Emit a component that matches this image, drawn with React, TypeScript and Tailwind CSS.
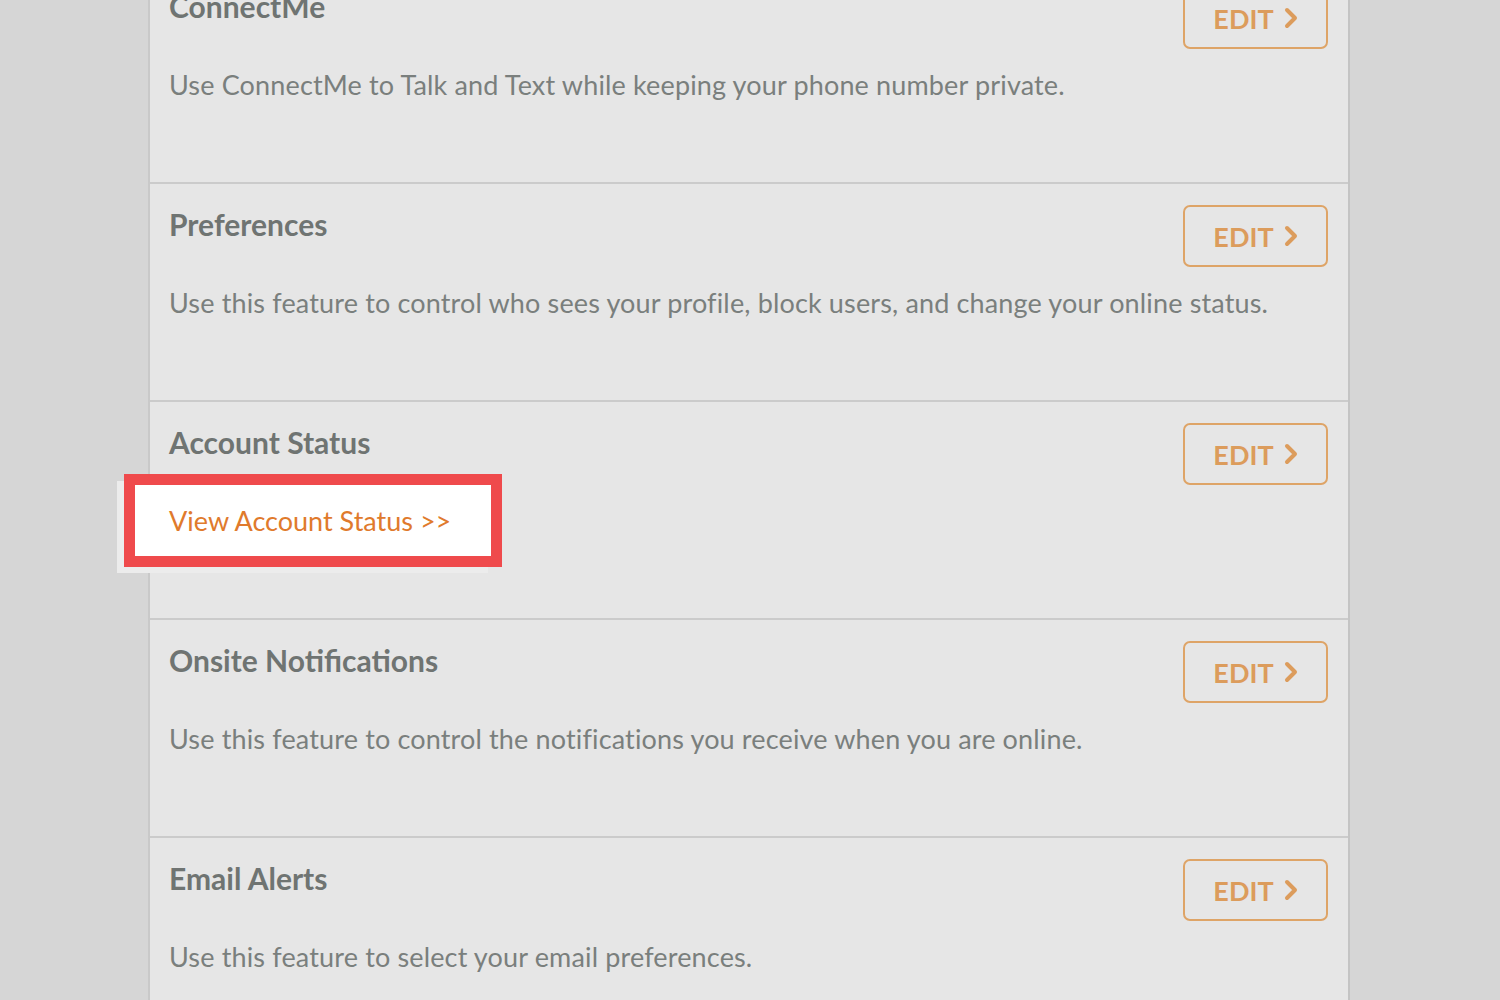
import React from "react";

const sections = [
  { title: "ConnectMe", desc: "Use ConnectMe to Talk and Text while keeping your phone number private." },
  { title: "Preferences", desc: "Use this feature to control who sees your profile, block users, and change your online status." },
  { title: "Account Status", link: "View Account Status >>" },
  { title: "Onsite Notifications", desc: "Use this feature to control the notifications you receive when you are online." },
  { title: "Email Alerts", desc: "Use this feature to select your email preferences." },
];

function EditButton() {
  return (
    <button className="flex h-[62px] w-[145px] items-center justify-center gap-[10px] rounded-[7px] border-2 border-[#dea467] text-[27px] font-bold text-[#dc9c5c]">
      <span className="leading-none">EDIT</span>
      <svg width="14" height="22" viewBox="0 0 14 22" fill="none">
        <path d="M3 3 L11 11 L3 19" stroke="#dc9c5c" strokeWidth="4" strokeLinecap="round" strokeLinejoin="round" />
      </svg>
    </button>
  );
}

export default function App() {
  return (
    <div className="h-[1000px] w-[1500px] overflow-hidden bg-[#d6d6d6]" style={{ fontFamily: "Lato, 'Open Sans', sans-serif" }}>
      <div className="ml-[148px] mt-[-34px] w-[1202px] border-l-2 border-r-2 border-l-[#c9c9c9] border-r-[#c4c4c4] bg-[#e6e6e6]">
        {sections.map((s) => (
          <div key={s.title} className="relative flex h-[218px] border-b-2 border-[#cbcbcb] pl-[19px] pr-[20px]">
            <div className="min-w-0 flex-1">
              <div className="mt-[22px] h-[36px] text-[30px] font-bold leading-[36px] text-[#6f7472]">{s.title}</div>
              {s.desc && (
                <div className="mt-[45px] whitespace-nowrap text-[27px] leading-[32px] tracking-[0.15px] text-[#7a7f7d]">{s.desc}</div>
              )}
              {s.link && (
                <div className="relative mt-[14px] ml-[-45px] w-[378px]">
                  <div className="absolute left-[-7px] top-[7px] h-[92px] w-[371px] bg-[#ececec]" />
                  <div className="relative flex h-[93px] items-center border-[11px] border-[#ef4a4c] bg-white pl-[34px] pt-[2px] text-[27px] text-[#e07a2c]">
                    {s.link}
                  </div>
                </div>
              )}
            </div>
            <div className="mt-[21px]">
              <EditButton />
            </div>
          </div>
        ))}
      </div>
    </div>
  );
}
